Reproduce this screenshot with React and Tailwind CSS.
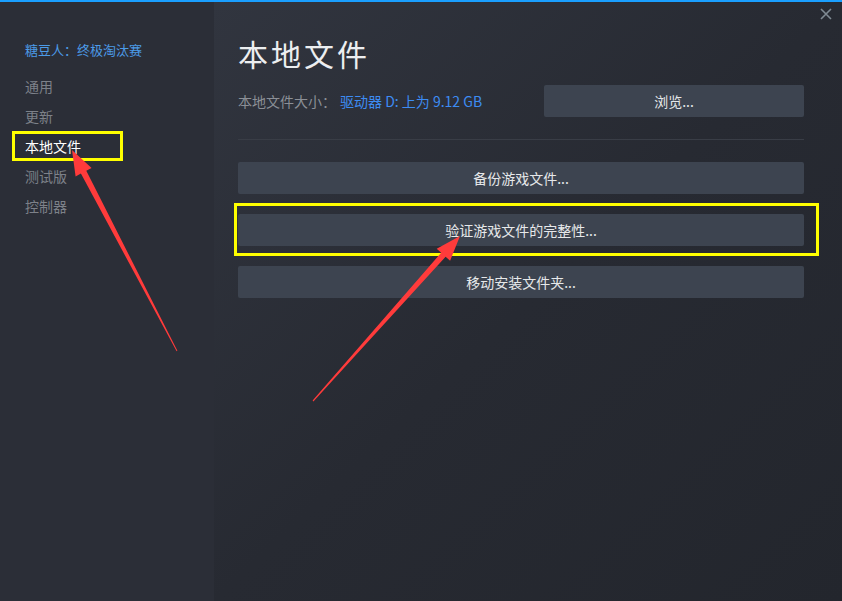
import React from "react";

const font = { fontFamily: '"Noto Sans CJK SC", "Microsoft YaHei", sans-serif' };

const navItems = ["通用", "更新", "本地文件", "测试版", "控制器"];

const ActionButton = ({ label, highlight }) => (
  <div className="relative">
    <button className="w-full h-8 rounded-[2px] bg-[#3d4450] text-[14px] text-[#e6e8ea] flex items-center justify-center">
      {label}
    </button>
    {highlight && (
      <div className="absolute left-[-4px] top-[-11px] w-[585px] h-[53px] border-[3px] border-[#ffff00] pointer-events-none" />
    )}
  </div>
);

export default function App() {
  return (
    <div
      className="relative w-[842px] h-[601px] overflow-hidden bg-[#262930] flex flex-col"
      style={font}
    >
      <div className="h-[2px] bg-[#1a9fff]" />
      <div className="flex flex-1">
        {/* sidebar */}
        <aside className="w-[214px] bg-[#2b2e37] pt-[40px] pl-[25px]">
          <div className="h-4 leading-4 text-[13px] text-[#4c9be8]">糖豆人：终极淘汰赛</div>
          <nav className="mt-[13px] flex flex-col">
            {navItems.map((item) => (
              <div
                key={item}
                className={`relative h-[30px] leading-[30px] text-[14px] ${
                  item === "本地文件" ? "text-white" : "text-[#7d8189]"
                }`}
              >
                {item}
                {item === "本地文件" && (
                  <div className="absolute left-[-13px] top-0 w-[111px] h-[30px] border-[3px] border-[#ffff00]" />
                )}
              </div>
            ))}
          </nav>
        </aside>

        {/* main */}
        <main className="relative flex-1 bg-gradient-to-br from-[#31353f] via-[#272a32] to-[#23262d] pl-6 pr-[38px] pt-[31px]">
          <svg
            className="absolute right-[9px] top-[5px]"
            width="14"
            height="14"
            viewBox="0 0 14 14"
          >
            <path d="M2 2 L12 12 M12 2 L2 12" stroke="#7f8a93" strokeWidth="1.6" />
          </svg>

          <h1 className="h-10 leading-10 text-[30px] tracking-[3px] text-[#eceef0] font-normal">
            本地文件
          </h1>

          <div className="mt-3 h-8 flex items-center justify-between">
            <div className="text-[14px]">
              <span className="text-[#8b8f96]">本地文件大小：</span>
              <span className="ml-1 text-[#3d8cf3]">驱动器 D: 上为 9.12 GB</span>
            </div>
            <button className="w-[260px] h-8 rounded-[2px] bg-[#3d4450] text-[14px] text-[#e6e8ea]">
              浏览...
            </button>
          </div>

          <div className="mt-[22px] h-px bg-[#393d46]" />

          <div className="mt-[22px] flex flex-col gap-5">
            <ActionButton label="备份游戏文件..." />
            <ActionButton label="验证游戏文件的完整性..." highlight />
            <ActionButton label="移动安装文件夹..." />
          </div>
        </main>
      </div>

      {/* annotation arrows */}
      <svg
        className="absolute left-0 top-0 pointer-events-none"
        width="842"
        height="601"
        viewBox="0 0 842 601"
      >
        <polygon
          fill="#ff3b3b"
          points="177.4,350.8 86.3,170.8 91.6,168 72,150 75.6,176.4 80.9,173.6 176.6,351.2"
        />
        <polygon
          fill="#ff3b3b"
          points="313.4,401.4 445.6,256.7 450.1,260.7 460,236 436.7,248.7 441.2,252.7 312.6,400.6"
        />
      </svg>
    </div>
  );
}
